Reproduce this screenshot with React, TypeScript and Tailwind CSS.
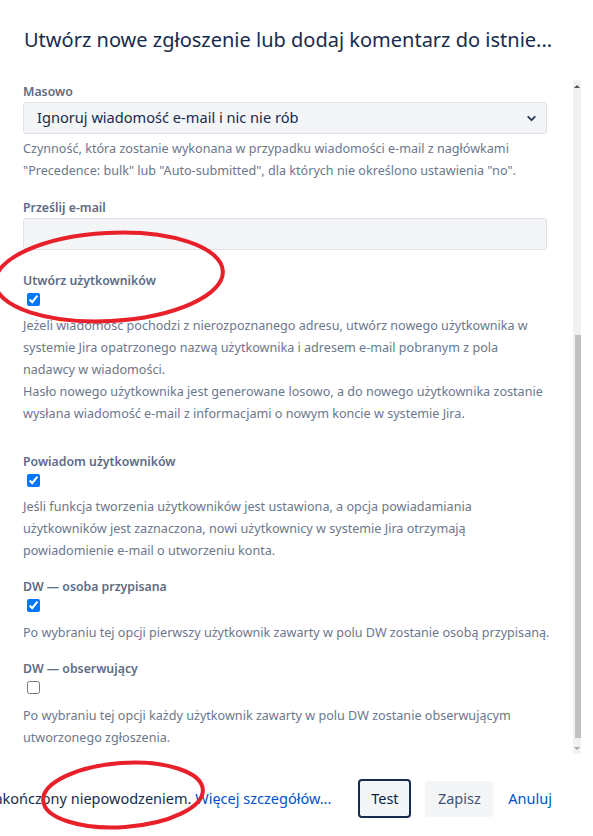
import { ChevronDown } from "lucide-react"

const font = "font-['Segoe_UI','Noto_Sans',sans-serif]"

function Label({ children }: { children: React.ReactNode }) {
    return <div className="text-[12.3px] leading-[20px] font-semibold text-[#5e6c84] whitespace-nowrap">{children}</div>
}

function Desc({ children, className = "" }: { children: React.ReactNode; className?: string }) {
    return <div className={`text-[12.6px] leading-[22px] text-[#6b778c] whitespace-nowrap ${className}`}>{children}</div>
}

function Check({ checked }: { checked: boolean }) {
    return (
        <div className="h-[19px] flex items-start">
            <input
                type="checkbox"
                checked={checked}
                readOnly
                className="ml-[4px] mt-[2px] w-[13px] h-[13px]"
            />
        </div>
    )
}

export default function App() {
    return (
        <div className={`relative w-[593px] h-[836px] bg-white overflow-hidden ${font}`}>
            <header className="h-[80px] flex items-center px-[24px]">
                <h1 className="text-[20px] text-[#172b4d] truncate whitespace-nowrap">
                    Utwórz nowe zgłoszenie lub dodaj komentarz do istnie...
                </h1>
            </header>

            <div className="flex h-[674px]">
                <div className="flex-1 pl-[23px] pr-[26px] pt-[2px] overflow-hidden">
                    <Label>Masowo</Label>
                    <div className="h-[32px] flex items-center justify-between bg-[#f4f5f7] border border-[#dfe1e6] rounded-[3px] pl-[13px] pr-[8px]">
                        <span className="text-[14.6px] text-[#172b4d]">Ignoruj wiadomość e-mail i nic nie rób</span>
                        <ChevronDown className="w-[13px] h-[13px] text-[#253858]" strokeWidth={3.5} />
                    </div>
                    <Desc className="mt-[4px]">
                        Czynność, która zostanie wykonana w przypadku wiadomości e-mail z nagłówkami
                        <br />
                        "Precedence: bulk" lub "Auto-submitted", dla których nie określono ustawienia "no".
                    </Desc>

                    <div className="mt-[16px]">
                        <Label>Prześlij e-mail</Label>
                        <div className="h-[32px] bg-[#f4f5f7] border border-[#dfe1e6] rounded-[3px]" />
                    </div>

                    <div className="mt-[21px]">
                        <Label>Utwórz użytkowników</Label>
                        <Check checked />
                        <Desc className="mt-[5px]">
                            Jeżeli wiadomość pochodzi z nierozpoznanego adresu, utwórz nowego użytkownika w
                            <br />
                            systemie Jira opatrzonego nazwą użytkownika i adresem e-mail pobranym z pola
                            <br />
                            nadawcy w wiadomości.
                            <br />
                            Hasło nowego użytkownika jest generowane losowo, a do nowego użytkownika zostanie
                            <br />
                            wysłana wiadomość e-mail z informacjami o nowym koncie w systemie Jira.
                        </Desc>
                    </div>

                    <div className="mt-[27px]">
                        <Label>Powiadom użytkowników</Label>
                        <Check checked />
                        <Desc className="mt-[5px]">
                            Jeśli funkcja tworzenia użytkowników jest ustawiona, a opcja powiadamiania
                            <br />
                            użytkowników jest zaznaczona, nowi użytkownicy w systemie Jira otrzymają
                            <br />
                            powiadomienie e-mail o utworzeniu konta.
                        </Desc>
                    </div>

                    <div className="mt-[15px]">
                        <Label>DW — osoba przypisana</Label>
                        <Check checked />
                        <Desc className="mt-[6px]">
                            Po wybraniu tej opcji pierwszy użytkownik zawarty w polu DW zostanie osobą przypisaną.
                        </Desc>
                    </div>

                    <div className="mt-[15px]">
                        <Label>DW — obserwujący</Label>
                        <Check checked={false} />
                        <Desc className="mt-[7px]">
                            Po wybraniu tej opcji każdy użytkownik zawarty w polu DW zostanie obserwującym
                            <br />
                            utworzonego zgłoszenia.
                        </Desc>
                    </div>
                </div>

                {/* scrollbar */}
                <div className="w-[8px] mr-[12px] bg-[#f1f1f1] flex flex-col items-center">
                    <div className="h-[12px] flex items-center justify-center">
                        <div className="w-0 h-0 border-x-[3px] border-x-transparent border-b-[3px] border-b-[#505050]" />
                    </div>
                    <div className="w-[6px] ml-[2px] mt-[243px] h-[403px] bg-[#c1c1c1]" />
                    <div className="mt-auto h-[12px] flex items-center justify-center">
                        <div className="w-0 h-0 border-x-[3px] border-x-transparent border-t-[3px] border-t-[#a3a3a3]" />
                    </div>
                </div>
            </div>

            <footer className="h-[82px] pt-[7px] flex items-center pr-[41px]">
                <div className="flex-1 min-w-0 overflow-hidden flex justify-end whitespace-nowrap text-[14.5px]">
                    <span className="text-[#172b4d]">Test zakończony niepowodzeniem.&nbsp;</span>
                    <span className="text-[#0052cc]">Więcej szczegółów...</span>
                </div>
                <button className="ml-[27px] w-[53px] h-[39px] rounded-[4px] border-2 border-[#172b4d] bg-[#f4f5f7] text-[14.5px] text-[#091e42]">
                    Test
                </button>
                <button className="ml-[14px] w-[68px] h-[36px] rounded-[3px] bg-[#f4f5f7] text-[14.5px] text-[#42526e]">
                    Zapisz
                </button>
                <button className="ml-[15px] text-[14.5px] text-[#0052cc]">Anuluj</button>
            </footer>

            {/* red hand-drawn annotations */}
            <svg className="absolute inset-0 pointer-events-none" width="593" height="836">
                <ellipse cx="109" cy="277" rx="114" ry="44" fill="none" stroke="#e8202a" strokeWidth="4" transform="rotate(-3 109 277)" />
                <ellipse cx="123" cy="795" rx="80" ry="32" fill="none" stroke="#e8202a" strokeWidth="4" transform="rotate(-4 123 795)" />
            </svg>
        </div>
    )
}
